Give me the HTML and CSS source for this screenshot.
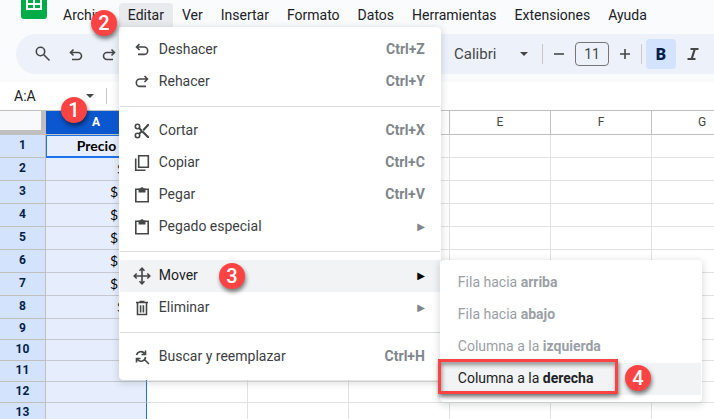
FILE: index.html
```html
<!DOCTYPE html>
<html lang="es">
<head>
  <meta charset="UTF-8">
  <title>Hoja de cálculo</title>
  <meta name="viewport" content="width=device-width, initial-scale=1.0">
  <link rel="stylesheet" href="styles.css">
</head>
<body>
  <header class="top">
    <div class="menubar">
      <svg class="logo" width="26" height="20" viewBox="0 0 26 20">
        <path d="M0 0h26v16a3 3 0 0 1-3 3H3a3 3 0 0 1-3-3z" fill="#00ac47"/>
        <path d="M5 0h16v10H5z" fill="#fff"/>
        <path d="M7 0h5v3H7zM14 0h5v3h-5zM7 5h5v3H7zM14 5h5v3h-5z" fill="#00ac47"/>
      </svg>
      <nav class="menus">
        <button>Archivo</button>
        <div class="menu-open">
          <button class="active">Editar</button>
          <span class="step step-2">2</span>
          <ul class="dropdown">
            <li><button>
              <svg viewBox="0 0 18 18"><path d="M6.500 3L3.500 6l3 3M3.500 6h7.500a3.700 3.700 0 0 1 0 7.400H5" /></svg>
              <span>Deshacer</span><kbd>Ctrl+Z</kbd></button></li>
            <li><button>
              <svg viewBox="0 0 18 18"><path d="M11.500 3l3 3-3 3M14.500 6H7a3.700 3.700 0 0 0 0 7.400h6" /></svg>
              <span>Rehacer</span><kbd>Ctrl+Y</kbd></button></li>
            <li class="divider"></li>
            <li><button>
              <svg viewBox="0 0 18 18"><circle cx="4.500" cy="4.500" r="2.200"/><circle cx="4.500" cy="13.500" r="2.200"/><path d="M6 6l3 3M6 12l3-3" stroke-width="2"/><path d="M8.500 10L10 8.500l6 6V16h-1.500zM9.500 7.500L14.500 2H16v1.500L11 9z" fill="#444746" stroke="none"/></svg>
              <span>Cortar</span><kbd>Ctrl+X</kbd></button></li>
            <li><button>
              <svg viewBox="0 0 18 18"><path d="M5.700 1.700h9.600v11.600H5.700zM2.700 4.500v11.800H12.500"/></svg>
              <span>Copiar</span><kbd>Ctrl+C</kbd></button></li>
            <li><button>
              <svg viewBox="0 0 18 18"><path d="M2.800 3.300h12.400v12.400H2.800z"/><path d="M5.500 2.500h1.700a1.900 1.900 0 0 1 3.600 0h1.700v4h-7z" fill="#444746" stroke="none"/></svg>
              <span>Pegar</span><kbd>Ctrl+V</kbd></button></li>
            <li><button>
              <svg viewBox="0 0 18 18"><path d="M2.800 3.300h12.400v12.400H2.800z"/><path d="M5.500 2.500h1.700a1.900 1.900 0 0 1 3.600 0h1.700v4h-7z" fill="#444746" stroke="none"/></svg>
              <span>Pegado especial</span><i class="more">▶</i></button></li>
            <li class="divider"></li>
            <li class="has-submenu"><button class="hover">
              <svg viewBox="0 0 18 18"><path d="M9 1.500v15M1.500 9h15M6.500 3.700L9 1.200l2.500 2.500M6.500 14.300L9 16.800l2.500-2.500M3.700 6.500L1.200 9l2.500 2.500M14.300 6.500L16.800 9l-2.500 2.500"/></svg>
              <span>Mover</span><i class="more">▶</i></button>
              <span class="step step-3">3</span>
              <ul class="dropdown submenu">
                <li><button disabled>Fila hacia <b>arriba</b></button></li>
                <li><button disabled>Fila hacia <b>abajo</b></button></li>
                <li><button disabled>Columna a la <b>izquierda</b></button></li>
                <li class="marked"><button class="hover">Columna a la <b>derecha</b></button>
                  <span class="frame"></span>
                  <span class="step step-4">4</span></li>
              </ul>
            </li>
            <li><button>
              <svg viewBox="0 0 18 18"><path d="M4.500 4.200v11.300h9V4.200M3 3.500h12M6.500 2.500h5M7.600 6.200v7.300M10.400 6.200v7.300"/></svg>
              <span>Eliminar</span><i class="more">▶</i></button></li>
            <li class="divider"></li>
            <li><button>
              <svg viewBox="0 0 18 18"><path d="M3.500 7a4.500 4.500 0 0 1 8-1.500M12.500 2.500v4h-4M12.500 9a4.500 4.500 0 0 1-8 2.500M3.500 14.500v-4h4M11.500 11.500l4.500 4.500"/></svg>
              <span>Buscar y reemplazar</span><kbd>Ctrl+H</kbd></button></li>
          </ul>
        </div>
        <button>Ver</button>
        <button>Insertar</button>
        <button>Formato</button>
        <button>Datos</button>
        <button>Herramientas</button>
        <button>Extensiones</button>
        <button>Ayuda</button>
      </nav>
    </div>

    <div class="toolbar">
      <div class="group history">
        <button aria-label="Buscar"><svg viewBox="0 0 18 18"><circle cx="6.500" cy="6.500" r="4.200"/><path d="M9.800 9.800l5.700 5.700"/></svg></button>
        <button aria-label="Deshacer"><svg viewBox="0 0 18 18"><path d="M6.500 4.500L3.500 7.500l3 3M3.500 7.500h7.500a3.500 3.500 0 0 1 0 7H5"/></svg></button>
        <button aria-label="Rehacer"><svg viewBox="0 0 18 18"><path d="M11.500 4.500l3 3-3 3M14.500 7.500H7a3.500 3.500 0 0 0 0 7h6"/></svg></button>
      </div>
      <div class="group format">
        <div class="font">
          <select aria-label="Fuente"><option>Calibri</option></select>
          <span class="caret"></span>
        </div>
        <span class="bar"></span>
        <button class="small" aria-label="Reducir"><svg viewBox="0 0 18 18"><path d="M4 9h10"/></svg></button>
        <input class="size" type="text" value="11" aria-label="Tamaño de fuente">
        <button class="small" aria-label="Aumentar"><svg viewBox="0 0 18 18"><path d="M4 9h10M9 4v10"/></svg></button>
        <span class="bar"></span>
        <button class="bold" aria-label="Negrita">B</button>
        <button aria-label="Cursiva"><svg viewBox="0 0 18 18"><path d="M6.500 4h8M3.500 14h8M10.800 4l-3.200 10" stroke-width="2.200"/></svg></button>
      </div>
    </div>
  </header>

  <div class="formula">
    <input class="name-box" type="text" value="A:A" aria-label="Cuadro de nombres">
    <span class="caret"></span>
    <span class="bar"></span>
    <span class="fx">fx</span>
    <span class="step step-1">1</span>
  </div>

  <main class="sheet">
    <table>
      <thead>
        <tr><th class="corner"></th><th class="selected">A</th><th>B</th><th>C</th><th>D</th><th>E</th><th>F</th><th>G</th></tr>
      </thead>
      <tbody>
        <tr><th>1</th><td class="title">Precio</td><td></td><td></td><td></td><td></td><td></td><td></td></tr>
        <tr><th>2</th><td class="short">$</td><td></td><td></td><td></td><td></td><td></td><td></td></tr>
        <tr><th>3</th><td>$</td><td></td><td></td><td></td><td></td><td></td><td></td></tr>
        <tr><th>4</th><td>$</td><td></td><td></td><td></td><td></td><td></td><td></td></tr>
        <tr><th>5</th><td>$</td><td></td><td></td><td></td><td></td><td></td><td></td></tr>
        <tr><th>6</th><td>$</td><td></td><td></td><td></td><td></td><td></td><td></td></tr>
        <tr><th>7</th><td>$</td><td></td><td></td><td></td><td></td><td></td><td></td></tr>
        <tr><th>8</th><td class="short">$</td><td></td><td></td><td></td><td></td><td></td><td></td></tr>
        <tr class="empty"><th>9</th><td></td><td></td><td></td><td></td><td></td><td></td><td></td></tr>
        <tr class="empty"><th>10</th><td></td><td></td><td></td><td></td><td></td><td></td><td></td></tr>
        <tr class="empty"><th>11</th><td></td><td></td><td></td><td></td><td></td><td></td><td></td></tr>
        <tr class="empty"><th>12</th><td></td><td></td><td></td><td></td><td></td><td></td><td></td></tr>
        <tr class="empty"><th>13</th><td></td><td></td><td></td><td></td><td></td><td></td><td></td></tr>
      </tbody>
    </table>
  </main>
</body>
</html>
```
FILE: styles.css
```css
* { box-sizing: border-box; }
body { margin: 0; height: 100vh; overflow: hidden; background: #fff; color: #202124; font: 14px Roboto, sans-serif; display: flex; flex-direction: column; }
button, input, select { font: inherit; color: inherit; border: 0; background: none; margin: 0; padding: 0; }
svg { display: block; fill: none; stroke: #444746; stroke-width: 1.6; }
ul { list-style: none; margin: 0; padding: 0; }

.top { background: #f9fbfd; padding-bottom: 8px; }
.menubar { display: flex; padding-left: 21px; height: 34px; }
.logo { stroke: none; }
.menus { display: flex; margin-left: 7px; padding: 3px 0 7px; }
.menus > button, .active { height: 24px; padding: 0 9px; white-space: nowrap; }
.menu-open { position: relative; }
.active { background: #e8eaed; border-radius: 4px 4px 0 0; }

/* menus */
.dropdown { position: absolute; z-index: 2; top: 24px; left: 0; width: 322px; padding: 6px 0; border: 1px solid #fff; border-radius: 0 4px 4px 4px; background: #fff; box-shadow: 0 2px 6px 2px rgba(60, 64, 67, .15); }
.dropdown li { position: relative; }
.dropdown li > button { display: flex; align-items: center; width: 100%; height: 32px; padding: 0 15px 2px 13px; white-space: pre; text-align: left; color: #3c4043; }
.dropdown svg { width: 18px; height: 18px; margin: 2px 8px 0 0; }
.dropdown kbd, .more { margin-left: auto; font: bold 14px Roboto, sans-serif; color: #80868b; }
.more { font: 10px "DejaVu Sans", sans-serif; }
.dropdown li > .hover { background: #f1f3f4; color: #202124; }
.hover .more { color: #000; }
.dropdown .divider { height: 1px; margin: 8px 0; background: #dadce0; }
.dropdown.submenu { top: 0; left: 320px; width: 262px; border-radius: 4px; }
.submenu li > button { padding-left: 17px; }
.submenu li > button:disabled { color: #9aa0a6; }
.frame { position: absolute; top: -4px; left: -3px; width: 180px; height: 35px; border: 3px solid #fc4343; box-shadow: 1px 3px 4px rgba(0, 0, 0, .5), inset 1px 3px 4px rgba(0, 0, 0, .4); }

/* numbered steps */
.step { position: absolute; z-index: 3; width: 26px; height: 26px; border-radius: 50%; background: #fc4343; color: #fff; font: 500 20px/26px Roboto, sans-serif; text-align: center; box-shadow: 1px 3px 4px rgba(0, 0, 0, .5); }
.step-1 { top: 15px; left: 61px; }
.step-2 { top: 7px; left: -28px; }
.step-3 { top: 3px; left: 99px; }
.step-4 { top: 2px; left: 184px; }

.toolbar { display: flex; align-items: center; height: 40px; margin-left: 16px; padding: 0 6px 0 12px; border-radius: 20px 0 0 20px; background: #edf2fa; color: #444746; }
.toolbar svg { width: 18px; height: 18px; }
.group { display: flex; align-items: center; }
.group button { display: flex; align-items: center; justify-content: center; width: 30px; height: 30px; border-radius: 4px; }
.history { gap: 3px; }
.format { margin-left: auto; }
.font { display: flex; align-items: center; width: 88px; font-size: 15px; }
.font select { flex: 1; appearance: none; }
.font .caret { margin-right: 14px; }
.caret { border: 4px solid transparent; border-top-color: #444746; border-bottom: 0; pointer-events: none; }
.bar { width: 1px; height: 20px; background: #c7c7c7; }
.group .small { width: 20px; margin: 0 6px; }
.size { width: 34px; height: 24px; border: 1px solid #747775; border-radius: 4px; text-align: center; }
.group .bold { margin: 0 2px 0 4px; background: #d3e3fd; color: #041e49; font-weight: 900; font-size: 16px; }

.formula { position: relative; display: flex; align-items: center; height: 28px; padding-left: 14px; }
.name-box { width: 72px; }
.formula .bar { height: 16px; margin: 0 12px; }
.fx { color: #5f6368; font: italic 15px "Liberation Serif", serif; }

/* grid */
.sheet { border-top: 1px solid #c0c0c0; overflow: hidden; }
table { width: 753px; table-layout: fixed; border-spacing: 0; }
th, td { height: 23px; padding: 0; border: solid #e1e1e1; border-width: 0 1px 1px 0; line-height: 18px; }
th { width: 101px; font: 12px Roboto, sans-serif; border-color: #c0c0c0; }
thead th { height: 24px; color: #444746; }
thead .corner { width: 46px; border: 5px solid #c0c0c0; border-width: 0 5px 5px 0; background: #f8f9fa; }
thead .selected { background: #0b57d0; color: #fff; font-weight: bold; }
tbody th { padding-bottom: 2px; background: #d3e3fd; color: #041e49; font-weight: bold; }
td:nth-child(2) { padding-left: 64px; background: #e6eefd; border-color: #c6c9ce; border-right-color: #1a73e8; font: 14px Lato, sans-serif; color: #000; }
td.short:nth-child(2) { padding-left: 71px; }
td.title:nth-child(2) { padding: 0; border: solid #1a73e8; border-width: 1px 1px 2px 1px; text-align: center; font-weight: bold; }
.empty th, .empty td { height: 21px; }
```
